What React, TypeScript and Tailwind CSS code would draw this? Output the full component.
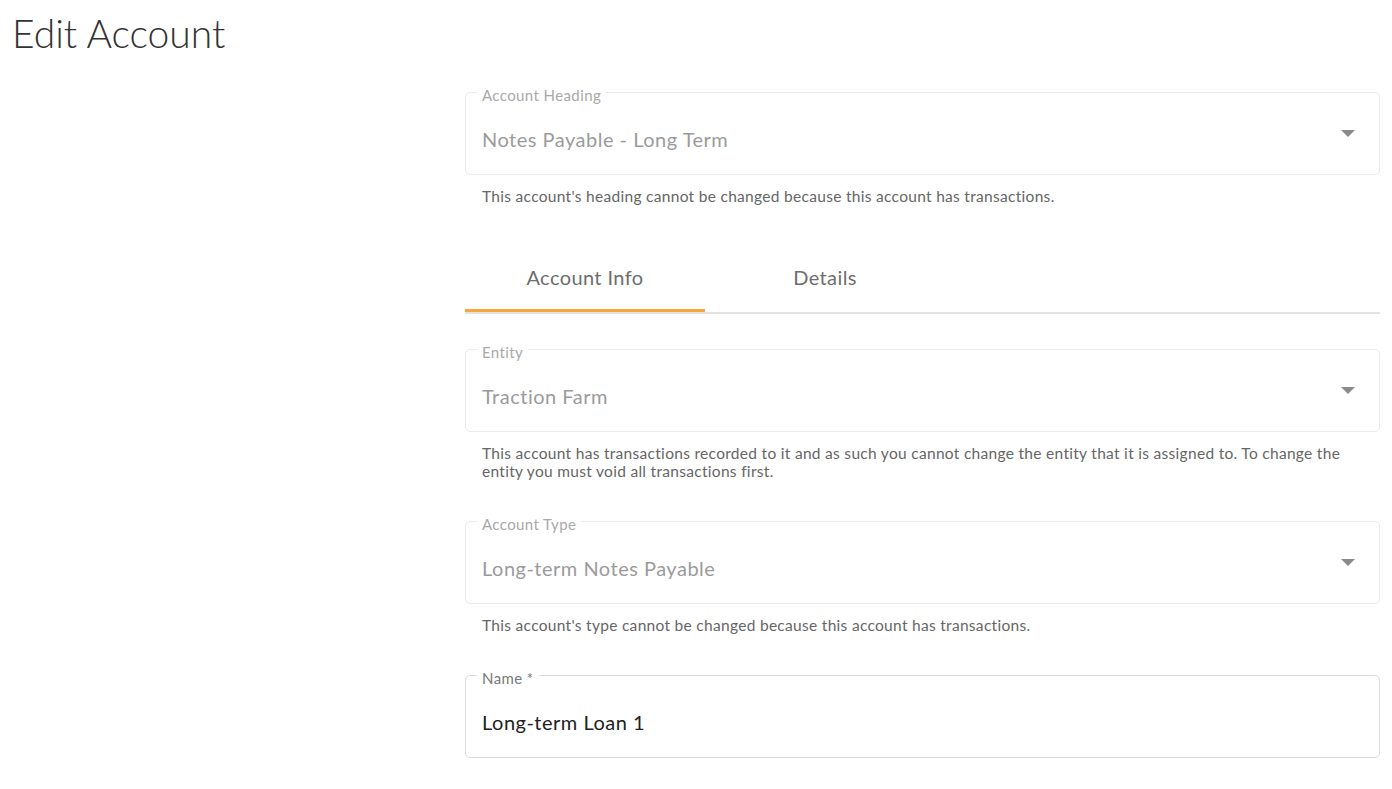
import React from "react";

const font = { fontFamily: '"Lato", "Noto Sans", sans-serif' };

function Caret() {
  return (
    <svg
      width="14"
      height="7"
      viewBox="0 0 14 7"
      className="absolute right-[24px] top-[37px]"
    >
      <path d="M0 0 L14 0 L7 7 Z" fill="#8a8a8a" />
    </svg>
  );
}

function Field({
  label,
  value,
  disabled = true,
  select = true,
}: {
  label: string;
  value: string;
  disabled?: boolean;
  select?: boolean;
}) {
  return (
    <div
      className={`relative h-[83px] rounded-[5px] border ${
        disabled ? "border-[#ebebeb]" : "border-[#dcdcdc]"
      }`}
    >
      <span
        className={`absolute left-[11px] top-[-7px] bg-white px-[5px] text-[15px] leading-[18px] tracking-[0.4px] ${
          disabled ? "text-[#a9a9a9]" : "text-[#787878]"
        }`}
      >
        {label}
      </span>
      <div
        className={`pl-[16px] pt-[34px] text-[20px] leading-[24px] tracking-[0.5px] ${
          disabled ? "text-[#9b9b9b]" : "text-[#222222]"
        }`}
      >
        {value}
      </div>
      {select && <Caret />}
    </div>
  );
}

function Helper({ children }: { children: React.ReactNode }) {
  return (
    <div className="mt-[12px] pl-[17px] pr-[17px] text-[15.5px] leading-[18px] tracking-[0.3px] text-[#666666]">
      {children}
    </div>
  );
}

export default function App() {
  return (
    <div className="min-h-screen bg-white" style={font}>
      <div className="px-3 pt-[9px]">
        <h1 className="text-[39px] font-light leading-[48px] text-[#333333]">
          Edit Account
        </h1>
      </div>
      <div className="pl-[465px] pr-[12px] pt-[35px]">
        <Field label="Account Heading" value="Notes Payable - Long Term" />
        <Helper>
          This account's heading cannot be changed because this account has
          transactions.
        </Helper>

        <div className="mt-[40px]">
          <div className="flex">
            <div className="flex h-[64px] w-[240px] items-center justify-center text-[20px] tracking-[0.4px] text-[#6e6e6e]">
              Account Info
            </div>
            <div className="flex h-[64px] w-[240px] items-center justify-center text-[20px] tracking-[0.4px] text-[#6e6e6e]">
              Details
            </div>
          </div>
          <div className="h-[3px] w-[240px] bg-[#f6a83a]" />
          <div className="h-[2px] w-full bg-[#e3e3e3]" />
        </div>

        <div className="mt-[35px]">
          <Field label="Entity" value="Traction Farm" />
          <Helper>
            This account has transactions recorded to it and as such you cannot
            change the entity that it is assigned to. To change the
            <br />
            entity you must void all transactions first.
          </Helper>
        </div>

        <div className="mt-[41px]">
          <Field label="Account Type" value="Long-term Notes Payable" />
          <Helper>
            This account's type cannot be changed because this account has
            transactions.
          </Helper>
        </div>

        <div className="mt-[41px]">
          <Field
            label="Name *"
            value="Long-term Loan 1"
            disabled={false}
            select={false}
          />
        </div>
      </div>
    </div>
  );
}
